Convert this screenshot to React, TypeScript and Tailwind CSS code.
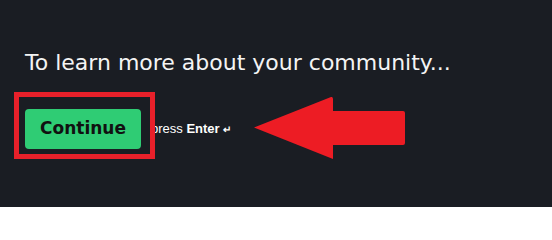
import React from 'react';

// Onboarding step with annotation overlay (red frame + arrow)
export default function App() {
  return (
    <div className="relative w-[552px] h-[207px] overflow-hidden bg-[#1a1d23]">
      <div className="pl-[25px] pt-[47px]">
        <h1 className="font-['DejaVu_Sans',sans-serif] text-[22px] leading-[32px] text-[#f4f4f4]">
          To learn more about your community...
        </h1>
        <div className="mt-[30px] flex items-center">
          <button className="h-[40px] w-[116px] rounded-[4px] bg-[#2fcc74] font-['DejaVu_Sans',sans-serif] text-[17px] font-bold text-[#111]">
            Continue
          </button>
          <span className="ml-[10px] font-['Liberation_Sans',Arial,sans-serif] text-[13px] text-white">
            press <b>Enter</b> <span className="text-[10px] font-bold">↵</span>
          </span>
        </div>
      </div>

      {/* annotation: frame around the button */}
      <div className="absolute left-[14px] top-[92px] h-[67px] w-[141px] border-[5px] border-[#e8202a]" />

      {/* annotation: arrow */}
      <svg
        className="absolute left-0 top-0"
        width="552"
        height="207"
        viewBox="0 0 552 207"
      >
        <path
          d="M254 127.5 L331 97 Q333 96.5 333 99 L333 111 L403 111 Q405 111 405 113 L405 143 Q405 145 403 145 L333 145 L333 159 Z"
          fill="#ed1c24"
        />
      </svg>
    </div>
  );
}
